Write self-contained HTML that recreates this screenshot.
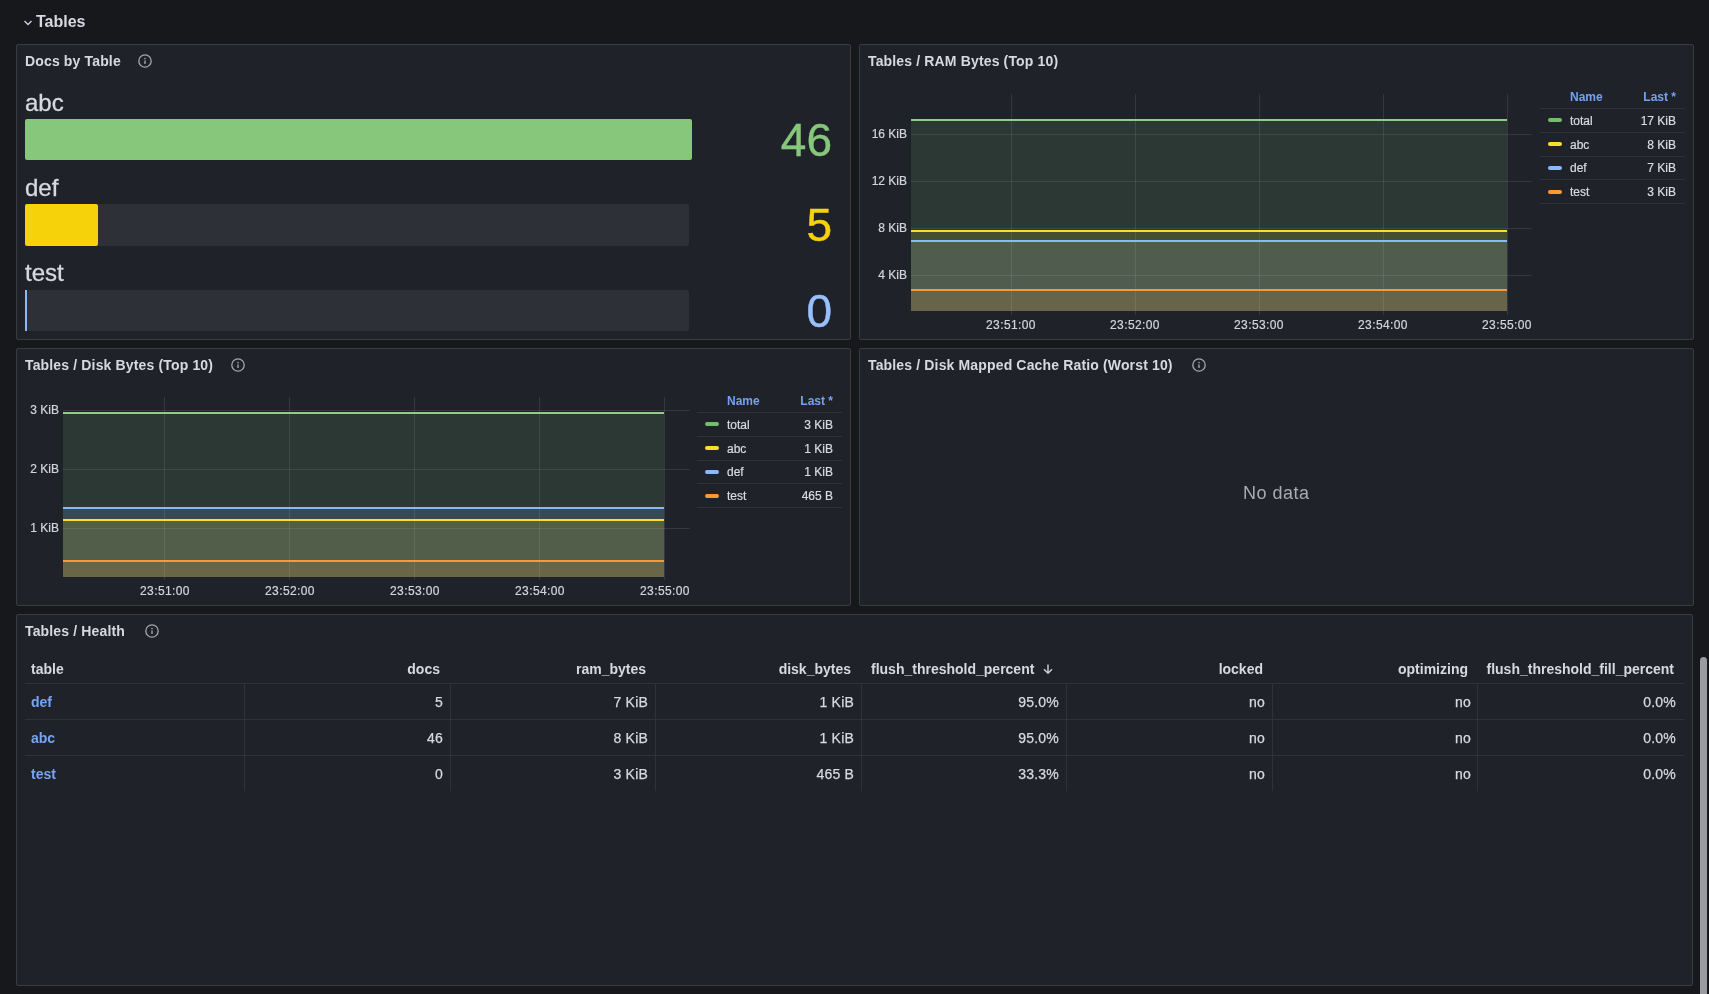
<!DOCTYPE html>
<html><head><meta charset="utf-8">
<style>
*{box-sizing:border-box;margin:0;padding:0}
html,body{width:1709px;height:994px;overflow:hidden;background:#16181c;font-family:"Liberation Sans",sans-serif;color:#ccccdc}
.a{position:absolute;white-space:nowrap}
.p{position:absolute;background:#20222a;border:1px solid #3a3c42;border-radius:2px}
.t{font-size:14px;line-height:14px;font-weight:700;color:#d8d9e0;letter-spacing:0.15px}
.info{position:absolute;width:14px;height:14px}
.lbl{font-size:24px;line-height:24px;color:#d8d9e0;-webkit-text-stroke:0.3px #d8d9e0}
.big{font-size:46px;line-height:46px;text-align:right;-webkit-text-stroke:0.4px currentColor}
.ax{font-size:12px;line-height:12px;color:#d4d5dc;-webkit-text-stroke:0.2px #d4d5dc}
.lg{font-size:12px;line-height:12px;color:#dadbe2;-webkit-text-stroke:0.2px #dadbe2}
.lh{font-weight:700;color:#74a2f2;-webkit-text-stroke:0}
.th{font-size:14px;line-height:14px;font-weight:700;color:#d8d9e0}
.td{font-size:14px;line-height:14px;color:#d8d9e0;-webkit-text-stroke:0.25px #d8d9e0;letter-spacing:0.2px}
.lnk{font-size:14px;line-height:14px;font-weight:700;color:#78a4f4}
</style></head><body><div style="position:absolute;left:0;top:0;width:1709px;height:994px;will-change:transform">
<!-- row header -->
<svg class="a" style="left:23px;top:19px" width="10" height="8" viewBox="0 0 10 8"><path d="M1.5 2 L5 5.5 L8.5 2" fill="none" stroke="#ccccdc" stroke-width="1.4"/></svg>
<div class="a" style="left:36px;top:14px;font-size:16px;line-height:16px;font-weight:700;color:#d8d9e0">Tables</div>

<!-- panels -->
<div class="p" style="left:16px;top:44px;width:835px;height:296px"></div>
<div class="p" style="left:859px;top:44px;width:835px;height:296px"></div>
<div class="p" style="left:16px;top:348px;width:835px;height:258px"></div>
<div class="p" style="left:859px;top:348px;width:835px;height:258px"></div>
<div class="p" style="left:16px;top:614px;width:1677px;height:372px"></div>

<!-- PANEL 1 -->
<div class="a t" style="left:25px;top:54px">Docs by Table</div>
<svg class="info" style="left:138px;top:54px" viewBox="0 0 14 14"><circle cx="7" cy="7" r="6.2" fill="none" stroke="#a5a7af" stroke-width="1.3"/><rect x="6.3" y="6.5" width="1.4" height="3.4" fill="#a5a7af"/><rect x="6.3" y="3.9" width="1.4" height="1.4" fill="#a5a7af"/></svg>

<div class="a lbl" style="left:25px;top:91px">abc</div>
<div class="a" style="left:25px;top:119px;width:667px;height:41px;background:#86c77c;border-radius:2px"></div>
<div class="a big" style="right:877px;top:117px;color:#86c77c">46</div>

<div class="a lbl" style="left:25px;top:176px">def</div>
<div class="a" style="left:25px;top:204px;width:664px;height:42px;background:#2e3038;border-radius:2px"></div>
<div class="a" style="left:25px;top:204px;width:73px;height:42px;background:#f5d20a;border-radius:2px"></div>
<div class="a big" style="right:877px;top:202px;color:#f5d20a">5</div>

<div class="a lbl" style="left:25px;top:261px">test</div>
<div class="a" style="left:27px;top:290px;width:662px;height:41px;background:#2e3038;border-radius:2px"></div>
<div class="a" style="left:25px;top:290px;width:2px;height:41px;background:#8ab8ff"></div>
<div class="a big" style="right:877px;top:288px;color:#98c0ff">0</div>

<!-- CHARTS -->
<svg class="a" style="left:0;top:0" width="1709" height="994">
<rect x="911" y="120" width="596" height="191" fill="#73bf69" fill-opacity="0.14"/>
<rect x="911" y="231" width="596" height="80" fill="#fade2a" fill-opacity="0.14"/>
<rect x="911" y="241" width="596" height="70" fill="#8ab8ff" fill-opacity="0.14"/>
<rect x="911" y="290" width="596" height="21" fill="#ff9830" fill-opacity="0.14"/>
<rect x="911" y="134" width="621" height="1" fill="#ccccdc" fill-opacity="0.12"/>
<rect x="911" y="181" width="621" height="1" fill="#ccccdc" fill-opacity="0.12"/>
<rect x="911" y="228" width="621" height="1" fill="#ccccdc" fill-opacity="0.12"/>
<rect x="911" y="275" width="621" height="1" fill="#ccccdc" fill-opacity="0.12"/>
<rect x="1011" y="94" width="1" height="221" fill="#ccccdc" fill-opacity="0.12"/>
<rect x="1135" y="94" width="1" height="221" fill="#ccccdc" fill-opacity="0.12"/>
<rect x="1259" y="94" width="1" height="221" fill="#ccccdc" fill-opacity="0.12"/>
<rect x="1383" y="94" width="1" height="221" fill="#ccccdc" fill-opacity="0.12"/>
<rect x="1507" y="94" width="1" height="221" fill="#ccccdc" fill-opacity="0.12"/>
<rect x="911" y="119" width="596" height="2" fill="#8fce86"/>
<rect x="911" y="230" width="596" height="2" fill="#fade2a"/>
<rect x="911" y="240" width="596" height="2" fill="#8ab8ff"/>
<rect x="911" y="289" width="596" height="2" fill="#ff9830"/>
<rect x="63" y="413" width="601" height="164" fill="#73bf69" fill-opacity="0.14"/>
<rect x="63" y="508" width="601" height="69" fill="#8ab8ff" fill-opacity="0.14"/>
<rect x="63" y="520" width="601" height="57" fill="#fade2a" fill-opacity="0.14"/>
<rect x="63" y="561" width="601" height="16" fill="#ff9830" fill-opacity="0.14"/>
<rect x="63" y="410" width="627" height="1" fill="#ccccdc" fill-opacity="0.12"/>
<rect x="63" y="469" width="627" height="1" fill="#ccccdc" fill-opacity="0.12"/>
<rect x="63" y="528" width="627" height="1" fill="#ccccdc" fill-opacity="0.12"/>
<rect x="164" y="397" width="1" height="183" fill="#ccccdc" fill-opacity="0.12"/>
<rect x="289" y="397" width="1" height="183" fill="#ccccdc" fill-opacity="0.12"/>
<rect x="414" y="397" width="1" height="183" fill="#ccccdc" fill-opacity="0.12"/>
<rect x="539" y="397" width="1" height="183" fill="#ccccdc" fill-opacity="0.12"/>
<rect x="664" y="397" width="1" height="183" fill="#ccccdc" fill-opacity="0.12"/>
<rect x="63" y="412" width="601" height="2" fill="#8fce86"/>
<rect x="63" y="507" width="601" height="2" fill="#8ab8ff"/>
<rect x="63" y="519" width="601" height="2" fill="#fade2a"/>
<rect x="63" y="560" width="601" height="2" fill="#ff9830"/>
</svg>
<!-- PANEL 2 -->
<div class="a t" style="left:868px;top:54px">Tables / RAM Bytes (Top 10)</div>

<!-- PANEL 3 -->
<div class="a t" style="left:25px;top:358px">Tables / Disk Bytes (Top 10)</div>
<svg class="info" style="left:231px;top:358px" viewBox="0 0 14 14"><circle cx="7" cy="7" r="6.2" fill="none" stroke="#a5a7af" stroke-width="1.3"/><rect x="6.3" y="6.5" width="1.4" height="3.4" fill="#a5a7af"/><rect x="6.3" y="3.9" width="1.4" height="1.4" fill="#a5a7af"/></svg>

<!-- PANEL 4 -->
<div class="a t" style="left:868px;top:358px">Tables / Disk Mapped Cache Ratio (Worst 10)</div>
<svg class="info" style="left:1192px;top:358px" viewBox="0 0 14 14"><circle cx="7" cy="7" r="6.2" fill="none" stroke="#a5a7af" stroke-width="1.3"/><rect x="6.3" y="6.5" width="1.4" height="3.4" fill="#a5a7af"/><rect x="6.3" y="3.9" width="1.4" height="1.4" fill="#a5a7af"/></svg>
<div class="a" style="left:1243px;top:484px;font-size:18px;line-height:18px;color:#a9abb3;letter-spacing:0.5px">No data</div>

<!-- PANEL 5 -->
<div class="a t" style="left:25px;top:624px">Tables / Health</div>
<svg class="info" style="left:145px;top:624px" viewBox="0 0 14 14"><circle cx="7" cy="7" r="6.2" fill="none" stroke="#a5a7af" stroke-width="1.3"/><rect x="6.3" y="6.5" width="1.4" height="3.4" fill="#a5a7af"/><rect x="6.3" y="3.9" width="1.4" height="1.4" fill="#a5a7af"/></svg>

<div class="a ax" style="right:802px;top:128px">16 KiB</div>
<div class="a ax" style="right:802px;top:175px">12 KiB</div>
<div class="a ax" style="right:802px;top:222px">8 KiB</div>
<div class="a ax" style="right:802px;top:269px">4 KiB</div>
<div class="a ax" style="left:961px;width:100px;text-align:center;top:319px;letter-spacing:0.4px">23:51:00</div>
<div class="a ax" style="left:1085px;width:100px;text-align:center;top:319px;letter-spacing:0.4px">23:52:00</div>
<div class="a ax" style="left:1209px;width:100px;text-align:center;top:319px;letter-spacing:0.4px">23:53:00</div>
<div class="a ax" style="left:1333px;width:100px;text-align:center;top:319px;letter-spacing:0.4px">23:54:00</div>
<div class="a ax" style="left:1457px;width:100px;text-align:center;top:319px;letter-spacing:0.4px">23:55:00</div>
<div class="a ax" style="right:1650px;top:404px">3 KiB</div>
<div class="a ax" style="right:1650px;top:463px">2 KiB</div>
<div class="a ax" style="right:1650px;top:522px">1 KiB</div>
<div class="a ax" style="left:115px;width:100px;text-align:center;top:585px;letter-spacing:0.4px">23:51:00</div>
<div class="a ax" style="left:240px;width:100px;text-align:center;top:585px;letter-spacing:0.4px">23:52:00</div>
<div class="a ax" style="left:365px;width:100px;text-align:center;top:585px;letter-spacing:0.4px">23:53:00</div>
<div class="a ax" style="left:490px;width:100px;text-align:center;top:585px;letter-spacing:0.4px">23:54:00</div>
<div class="a ax" style="left:615px;width:100px;text-align:center;top:585px;letter-spacing:0.4px">23:55:00</div>
<div class="a lg lh" style="left:1570px;top:91px">Name</div>
<div class="a lg lh" style="right:33px;top:91px">Last *</div>
<div class="a" style="left:1540px;top:108px;width:145px;height:1px;background:#303238"></div>
<div class="a" style="left:1540px;top:132px;width:145px;height:1px;background:#303238"></div>
<div class="a" style="left:1540px;top:156px;width:145px;height:1px;background:#303238"></div>
<div class="a" style="left:1540px;top:179px;width:145px;height:1px;background:#303238"></div>
<div class="a" style="left:1540px;top:203px;width:145px;height:1px;background:#303238"></div>
<div class="a" style="left:1548px;top:118px;width:14px;height:4px;border-radius:2px;background:#73bf69"></div>
<div class="a lg" style="left:1570px;top:115px">total</div>
<div class="a lg" style="right:33px;top:115px">17 KiB</div>
<div class="a" style="left:1548px;top:142px;width:14px;height:4px;border-radius:2px;background:#fade2a"></div>
<div class="a lg" style="left:1570px;top:139px">abc</div>
<div class="a lg" style="right:33px;top:139px">8 KiB</div>
<div class="a" style="left:1548px;top:166px;width:14px;height:4px;border-radius:2px;background:#8ab8ff"></div>
<div class="a lg" style="left:1570px;top:162px">def</div>
<div class="a lg" style="right:33px;top:162px">7 KiB</div>
<div class="a" style="left:1548px;top:190px;width:14px;height:4px;border-radius:2px;background:#ff9830"></div>
<div class="a lg" style="left:1570px;top:186px">test</div>
<div class="a lg" style="right:33px;top:186px">3 KiB</div>
<div class="a lg lh" style="left:727px;top:395px">Name</div>
<div class="a lg lh" style="right:876px;top:395px">Last *</div>
<div class="a" style="left:697px;top:412px;width:145px;height:1px;background:#303238"></div>
<div class="a" style="left:697px;top:436px;width:145px;height:1px;background:#303238"></div>
<div class="a" style="left:697px;top:460px;width:145px;height:1px;background:#303238"></div>
<div class="a" style="left:697px;top:483px;width:145px;height:1px;background:#303238"></div>
<div class="a" style="left:697px;top:507px;width:145px;height:1px;background:#303238"></div>
<div class="a" style="left:705px;top:422px;width:14px;height:4px;border-radius:2px;background:#73bf69"></div>
<div class="a lg" style="left:727px;top:419px">total</div>
<div class="a lg" style="right:876px;top:419px">3 KiB</div>
<div class="a" style="left:705px;top:446px;width:14px;height:4px;border-radius:2px;background:#fade2a"></div>
<div class="a lg" style="left:727px;top:443px">abc</div>
<div class="a lg" style="right:876px;top:443px">1 KiB</div>
<div class="a" style="left:705px;top:470px;width:14px;height:4px;border-radius:2px;background:#8ab8ff"></div>
<div class="a lg" style="left:727px;top:466px">def</div>
<div class="a lg" style="right:876px;top:466px">1 KiB</div>
<div class="a" style="left:705px;top:494px;width:14px;height:4px;border-radius:2px;background:#ff9830"></div>
<div class="a lg" style="left:727px;top:490px">test</div>
<div class="a lg" style="right:876px;top:490px">465 B</div>
<div class="a" style="left:25px;top:683px;width:1659px;height:1px;background:#303238"></div>
<div class="a" style="left:25px;top:719px;width:1659px;height:1px;background:#303238"></div>
<div class="a" style="left:25px;top:755px;width:1659px;height:1px;background:#303238"></div>
<div class="a" style="left:244px;top:684px;width:1px;height:107px;background:#303238"></div>
<div class="a" style="left:450px;top:684px;width:1px;height:107px;background:#303238"></div>
<div class="a" style="left:655px;top:684px;width:1px;height:107px;background:#303238"></div>
<div class="a" style="left:861px;top:684px;width:1px;height:107px;background:#303238"></div>
<div class="a" style="left:1066px;top:684px;width:1px;height:107px;background:#303238"></div>
<div class="a" style="left:1272px;top:684px;width:1px;height:107px;background:#303238"></div>
<div class="a" style="left:1477px;top:684px;width:1px;height:107px;background:#303238"></div>
<div class="a th" style="left:31px;top:662px">table</div>
<div class="a th" style="right:1269px;top:662px">docs</div>
<div class="a th" style="right:1063px;top:662px">ram_bytes</div>
<div class="a th" style="right:858px;top:662px">disk_bytes</div>
<div class="a th" style="right:446px;top:662px">locked</div>
<div class="a th" style="right:241px;top:662px">optimizing</div>
<div class="a th" style="right:35px;top:662px">flush_threshold_fill_percent</div>
<div class="a th" style="left:871px;top:662px">flush_threshold_percent</div>
<svg class="a" style="left:1043px;top:664px" width="10" height="10" viewBox="0 0 10 10"><path d="M5 0.5V9 M1 5.2L5 9.2L9 5.2" fill="none" stroke="#d0d1d9" stroke-width="1.4"/></svg>
<div class="a lnk" style="left:31px;top:695px">def</div>
<div class="a td" style="right:1266px;top:695px">5</div>
<div class="a td" style="right:1061px;top:695px">7 KiB</div>
<div class="a td" style="right:855px;top:695px">1 KiB</div>
<div class="a td" style="right:650px;top:695px">95.0%</div>
<div class="a td" style="right:444px;top:695px">no</div>
<div class="a td" style="right:238px;top:695px">no</div>
<div class="a td" style="right:33px;top:695px">0.0%</div>
<div class="a lnk" style="left:31px;top:731px">abc</div>
<div class="a td" style="right:1266px;top:731px">46</div>
<div class="a td" style="right:1061px;top:731px">8 KiB</div>
<div class="a td" style="right:855px;top:731px">1 KiB</div>
<div class="a td" style="right:650px;top:731px">95.0%</div>
<div class="a td" style="right:444px;top:731px">no</div>
<div class="a td" style="right:238px;top:731px">no</div>
<div class="a td" style="right:33px;top:731px">0.0%</div>
<div class="a lnk" style="left:31px;top:767px">test</div>
<div class="a td" style="right:1266px;top:767px">0</div>
<div class="a td" style="right:1061px;top:767px">3 KiB</div>
<div class="a td" style="right:855px;top:767px">465 B</div>
<div class="a td" style="right:650px;top:767px">33.3%</div>
<div class="a td" style="right:444px;top:767px">no</div>
<div class="a td" style="right:238px;top:767px">no</div>
<div class="a td" style="right:33px;top:767px">0.0%</div>
<!-- scrollbar -->
<div class="a" style="left:1700px;top:657px;width:7px;height:340px;background:#9a9ba1;border-radius:4px"></div>
</div></body></html>
